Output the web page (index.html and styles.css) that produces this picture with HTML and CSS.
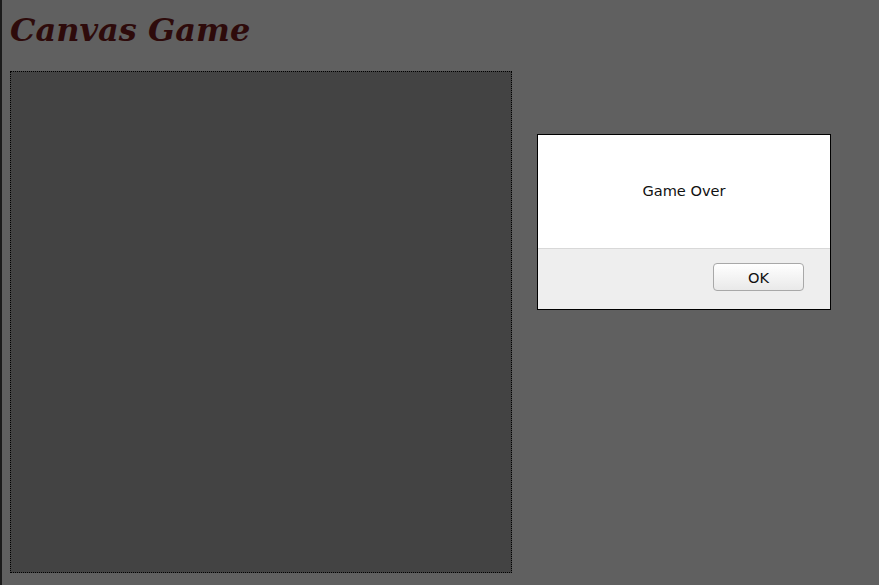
FILE: index.html
```html
<!DOCTYPE html>
<html>
<head>
<meta charset="utf-8">
<title>Canvas Game</title>
<link rel="stylesheet" href="styles.css">
</head>
<body>
<div class="page">
  <h1 class="title">Canvas Game</h1>
  <canvas class="board" width="500" height="500"></canvas>
</div>
<div class="dialog" role="alertdialog">
  <div class="dialog-body">Game Over</div>
  <div class="dialog-footer">
    <button class="btn-ok" type="button">OK</button>
  </div>
</div>
</body>
</html>
```
FILE: styles.css
```css
html, body {
  margin: 0;
  padding: 0;
  height: 100%;
  background: #606060;
}
body {
  font-family: "DejaVu Serif", serif;
  overflow: hidden;
}
.page {
  box-sizing: border-box;
  min-height: 100%;
  border-left: 2px solid #1b1b1b;
  padding: 12px 0 0 8px;
}
.title {
  margin: 0 0 22px 0;
  font-family: "DejaVu Serif", serif;
  font-size: 32px;
  font-weight: bold;
  font-style: italic;
  color: #2e0b0b;
  line-height: 37px;
}
.board {
  display: block;
  width: 500px;
  height: 500px;
  border: 1px dotted #000;
  background: #434343;
}
.dialog {
  position: absolute;
  left: 537px;
  top: 134px;
  width: 292px;
  border: 1px solid #000;
  background: #fff;
  font-family: "DejaVu Sans", sans-serif;
  font-size: 14.6px;
  color: #111;
}
.dialog-body {
  height: 113px;
  display: flex;
  align-items: center;
  justify-content: center;
  padding-bottom: 2px;
  box-sizing: border-box;
}
.dialog-footer {
  height: 61px;
  box-sizing: border-box;
  border-top: 1px solid #d8d8d8;
  background: #eeeeee;
  display: flex;
  justify-content: flex-end;
  align-items: flex-start;
  padding: 14px 26px 0 0;
}
.btn-ok {
  width: 91px;
  height: 28px;
  border: 1px solid #a8a8a8;
  border-radius: 4px;
  background: linear-gradient(#ffffff, #e9e9e9);
  font-family: "DejaVu Sans", sans-serif;
  font-size: 14.6px;
  color: #111;
  padding: 0;
}
```
